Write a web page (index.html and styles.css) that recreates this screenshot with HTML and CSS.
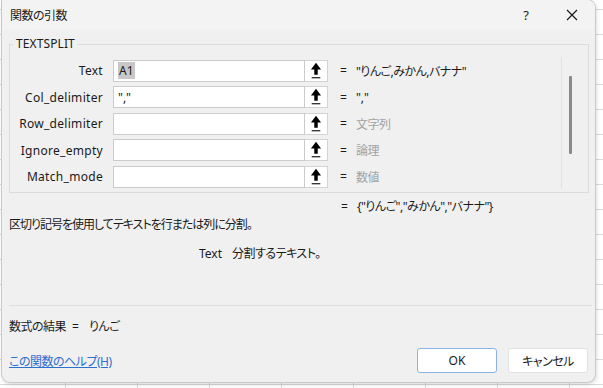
FILE: index.html
```html
<!DOCTYPE html>
<html lang="ja">
<head>
<meta charset="utf-8">
<link rel="stylesheet" href="styles.css">
</head>
<body>
<div class="dialog">
  <div class="titlebar">
    <span class="title jp">関数の引数</span>
    <span class="tb-btn help">?</span>
    <span class="tb-btn close">
      <svg width="12" height="12" viewBox="0 0 12 12"><path d="M1 1 L11 11 M11 1 L1 11" stroke="#1a1a1a" stroke-width="1.2" fill="none"/></svg>
    </span>
  </div>

  <div class="group">
    <span class="legend">TEXTSPLIT</span>
    <div class="args">
      <div class="rows">
        <div class="row">
          <span class="lbl">Text</span>
          <span class="inp"><span class="sel">A1</span></span>
          <span class="refbtn"><svg width="23" height="20" viewBox="0 0 23 20"><path d="M11.5 1.5 L16.8 8.5 L13.3 8.5 L13.3 14 L9.7 14 L9.7 8.5 L6.2 8.5 Z" fill="#000"/><rect x="7" y="16.3" width="9" height="1.4" fill="#333"/></svg></span>
          <span class="eq">=</span>
          <span class="val jp">"りんご,みかん,バナナ"</span>
        </div>
        <div class="row">
          <span class="lbl">Col_delimiter</span>
          <span class="inp">","</span>
          <span class="refbtn"><svg width="23" height="20" viewBox="0 0 23 20"><path d="M11.5 1.5 L16.8 8.5 L13.3 8.5 L13.3 14 L9.7 14 L9.7 8.5 L6.2 8.5 Z" fill="#000"/><rect x="7" y="16.3" width="9" height="1.4" fill="#333"/></svg></span>
          <span class="eq">=</span>
          <span class="val">","</span>
        </div>
        <div class="row">
          <span class="lbl">Row_delimiter</span>
          <span class="inp"></span>
          <span class="refbtn"><svg width="23" height="20" viewBox="0 0 23 20"><path d="M11.5 1.5 L16.8 8.5 L13.3 8.5 L13.3 14 L9.7 14 L9.7 8.5 L6.2 8.5 Z" fill="#000"/><rect x="7" y="16.3" width="9" height="1.4" fill="#333"/></svg></span>
          <span class="eq">=</span>
          <span class="val muted jp">文字列</span>
        </div>
        <div class="row">
          <span class="lbl">Ignore_empty</span>
          <span class="inp"></span>
          <span class="refbtn"><svg width="23" height="20" viewBox="0 0 23 20"><path d="M11.5 1.5 L16.8 8.5 L13.3 8.5 L13.3 14 L9.7 14 L9.7 8.5 L6.2 8.5 Z" fill="#000"/><rect x="7" y="16.3" width="9" height="1.4" fill="#333"/></svg></span>
          <span class="eq">=</span>
          <span class="val muted jp">論理</span>
        </div>
        <div class="row">
          <span class="lbl">Match_mode</span>
          <span class="inp"></span>
          <span class="refbtn"><svg width="23" height="20" viewBox="0 0 23 20"><path d="M11.5 1.5 L16.8 8.5 L13.3 8.5 L13.3 14 L9.7 14 L9.7 8.5 L6.2 8.5 Z" fill="#000"/><rect x="7" y="16.3" width="9" height="1.4" fill="#333"/></svg></span>
          <span class="eq">=</span>
          <span class="val muted jp">数値</span>
        </div>
      </div>
      <div class="scroll"><span class="thumb"></span></div>
    </div>
  </div>

  <div class="result-eq"><span class="eq2">=</span><span class="jp">{"りんご","みかん","バナナ"}</span></div>
  <div class="desc jp">区切り記号を使用してテキストを行または列に分割。</div>
  <div class="argdesc"><span class="argname">Text</span><span class="jp">分割するテキスト。</span></div>
  <div class="sep"></div>
  <div class="formula"><span class="jp">数式の結果</span><span class="feq">=</span><span class="fres jp">りんご</span></div>
  <div class="footer">
    <a class="helplink jp">この関数のヘルプ(H)</a>
    <span class="btn ok">OK</span>
    <span class="btn cancel jp">キャンセル</span>
  </div>
</div>
</body>
</html>
```

FILE: styles.css
```css
* { box-sizing: border-box; }
html, body { margin: 0; padding: 0; }
body {
  width: 603px;
  height: 388px;
  overflow: hidden;
  background-color: #ffffff;
  background-image:
    repeating-linear-gradient(to right, transparent 0, transparent 64px, #dadada 64px, #dadada 65px, transparent 65px, transparent 72px),
    repeating-linear-gradient(to bottom, transparent 0, transparent 9px, #dadada 9px, #dadada 10px, transparent 10px, transparent 25px);
  background-position: 1px 0, 0 0;
  font-family: "Noto Sans", "Noto Sans CJK JP", sans-serif;
  font-size: 12px;
  color: #1a1a1a;
  font-feature-settings: "palt";
}
.jp { letter-spacing: -0.5px; }
.dialog {
  width: 593px;
  height: 382px;
  margin-left: 2px;
  background: #f0f0f0;
  border-radius: 0 8px 8px 8px;
  box-shadow: 0 0 0 1px #c9c9c9, 1px 2px 5px rgba(0,0,0,0.18);
  display: flex;
  flex-direction: column;
  overflow: hidden;
}
.titlebar {
  height: 30px;
  flex: none;
  display: flex;
  align-items: center;
  background: #f3f3f3;
  padding-left: 8px;
}
.title { flex: 1; font-size: 12px; }
.tb-btn {
  width: 46px;
  height: 30px;
  display: flex;
  align-items: center;
  justify-content: center;
}
.help { font-size: 13px; font-family: "Noto Sans", sans-serif; }

.group {
  position: relative;
  margin: 14px 6px 0 7px;
  height: 149px;
  flex: none;
  border: 1px solid #dcdcdc;
}
.legend {
  position: absolute;
  top: -9px;
  left: 3px;
  padding: 0 3px;
  background: #f0f0f0;
  line-height: 16px;
  letter-spacing: 0.1px;
}
.args { display: flex; margin-top: 12px; height: 131px; }
.rows {
  width: 552px;
  border-right: 1px solid #e2e2e2;
  padding-top: 2.5px;
}
.row {
  display: flex;
  align-items: center;
  height: 22px;
  margin-bottom: 4.5px;
}
.lbl { width: 93px; text-align: right; letter-spacing: 0.3px; }
.inp {
  margin-left: 10px;
  width: 192px;
  height: 22px;
  background: #fff;
  border: 1px solid #cbcbcb;
  display: flex;
  align-items: center;
  padding-left: 4px;
}
.sel { background: #c8c8c8; padding: 0 1px; line-height: 17px; }
.refbtn {
  width: 23px;
  height: 22px;
  background: #fff;
  border: 1px solid #d3d3d3;
  border-left: none;
  display: flex;
  align-items: center;
  justify-content: center;
}
.refbtn svg { display: block; }
.eq { margin-left: 12px; }
.val { margin-left: 9px; }
.muted { color: #a3a3a3; }
.scroll { flex: 1; position: relative; }
.thumb {
  display: block;
  margin: 19px 0 0 7px;
  width: 3px;
  height: 78px;
  background: #8a8a8a;
  border-radius: 1px;
}

.result-eq { margin-top: 6px; padding-left: 339px; line-height: 16px; }
.eq2 { margin-right: 9px; }
.desc { margin-top: 2px; padding-left: 7px; line-height: 16px; letter-spacing: -1px; }
.argdesc { margin-top: 13px; padding-left: 197px; line-height: 16px; }
.argname { margin-right: 10px; }
.sep { margin: 43px 3px 0 7px; height: 1px; background: #dedede; flex: none; }
.formula { margin-top: 13px; padding-left: 7px; line-height: 16px; }
.feq { margin-left: 6px; }
.fres { margin-left: 10px; }
.footer {
  margin-top: 13px;
  display: flex;
  align-items: center;
  padding: 0 7px;
}
.helplink {
  flex: 1;
  color: #2b6fcf;
  text-decoration: underline;
}
.btn {
  width: 80px;
  height: 25px;
  background: #fff;
  border-radius: 3px;
  display: flex;
  align-items: center;
  justify-content: center;
  border: 1px solid #e2e2e2;
}
.ok { border-color: #8ab4e6; margin-right: 11px; }
```
